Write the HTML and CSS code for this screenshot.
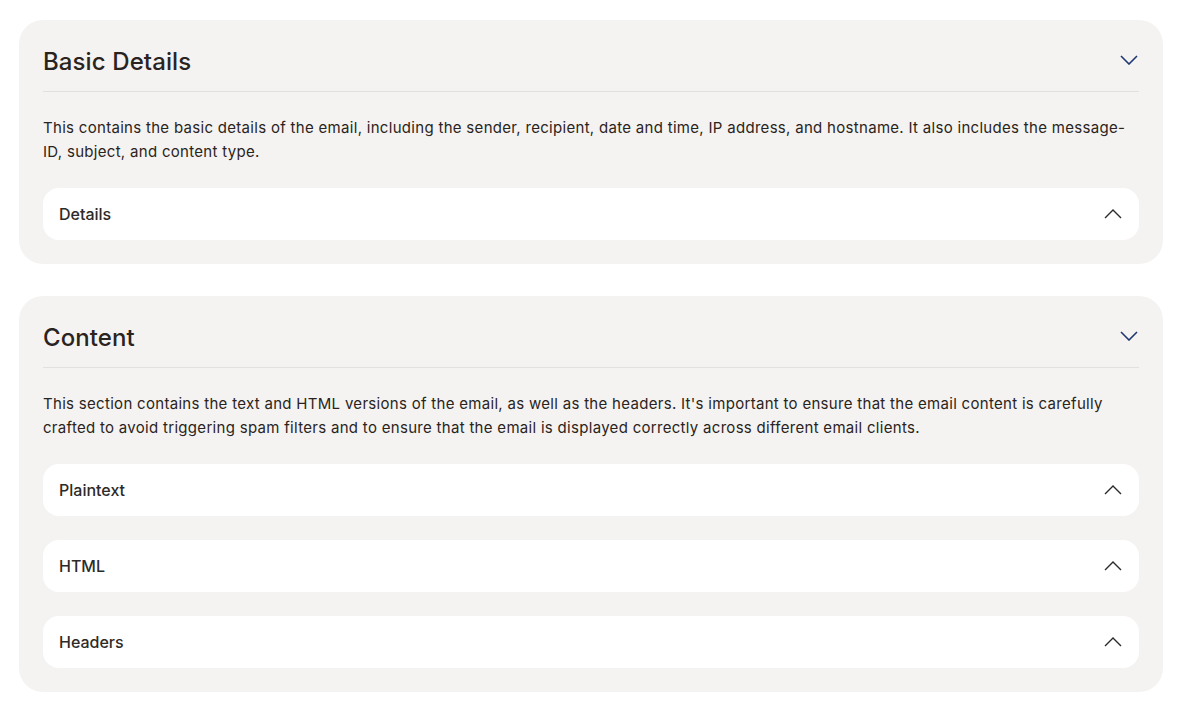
FILE: index.html
```html
<!DOCTYPE html>
<html lang="en">
<head>
<meta charset="utf-8">
<title>Email details</title>
<link rel="stylesheet" href="styles.css">
</head>
<body>
<main class="page">
  <section class="card">
    <header class="card-head">
      <h2 class="card-title">Basic Details</h2>
      <svg class="chev-down" width="18" height="10" viewBox="0 0 18 10" aria-hidden="true"><path d="M1 1l8 8 8-8" fill="none" stroke="currentColor" stroke-width="1.6"/></svg>
    </header>
    <p class="card-desc">This contains the basic details of the email, including the sender, recipient, date and time, IP address, and hostname. It also includes the message-ID, subject, and content type.</p>
    <div class="rows">
      <div class="row"><span class="row-label">Details</span><svg class="chev-up" width="18" height="10" viewBox="0 0 18 10" aria-hidden="true"><path d="M1 9l8-8 8 8" fill="none" stroke="currentColor" stroke-width="1.4"/></svg></div>
    </div>
  </section>
  <section class="card">
    <header class="card-head">
      <h2 class="card-title">Content</h2>
      <svg class="chev-down" width="18" height="10" viewBox="0 0 18 10" aria-hidden="true"><path d="M1 1l8 8 8-8" fill="none" stroke="currentColor" stroke-width="1.6"/></svg>
    </header>
    <p class="card-desc">This section contains the text and HTML versions of the email, as well as the headers. It's important to ensure that the email content is carefully crafted to avoid triggering spam filters and to ensure that the email is displayed correctly across different email clients.</p>
    <div class="rows">
      <div class="row"><span class="row-label">Plaintext</span><svg class="chev-up" width="18" height="10" viewBox="0 0 18 10" aria-hidden="true"><path d="M1 9l8-8 8 8" fill="none" stroke="currentColor" stroke-width="1.4"/></svg></div>
      <div class="row"><span class="row-label">HTML</span><svg class="chev-up" width="18" height="10" viewBox="0 0 18 10" aria-hidden="true"><path d="M1 9l8-8 8 8" fill="none" stroke="currentColor" stroke-width="1.4"/></svg></div>
      <div class="row"><span class="row-label">Headers</span><svg class="chev-up" width="18" height="10" viewBox="0 0 18 10" aria-hidden="true"><path d="M1 9l8-8 8 8" fill="none" stroke="currentColor" stroke-width="1.4"/></svg></div>
    </div>
  </section>
</main>
</body>
</html>
```

FILE: styles.css
```css
* { box-sizing: border-box; }
html, body { margin: 0; padding: 0; background: #ffffff; }
body {
  font-family: Inter, "Noto Sans", "Liberation Sans", sans-serif;
  color: #2a2420;
}
.page {
  padding: 20px 27px 24px 19px;
  display: flex;
  flex-direction: column;
  gap: 32px;
}
.card {
  background: #f5f3f2;
  border-radius: 24px;
  padding: 24px;
}
.card-head {
  display: flex;
  align-items: center;
  justify-content: space-between;
  height: 48px;
  padding-bottom: 13px;
  border-bottom: 1px solid #e2e0de;
}
.card-title {
  margin: 2px 0 0;
  font-size: 24px;
  font-weight: 500;
  line-height: 34px;
  letter-spacing: 0.1px;
  color: #2a2420;
}
.chev-down {
  display: block;
  color: #1d3770;
  margin-right: 1px;
  margin-top: -3px;
}
.card-desc {
  margin: 24px 0;
  font-size: 15px;
  line-height: 24px;
  letter-spacing: 0.3px;
  color: #2a2420;
}
.rows {
  display: flex;
  flex-direction: column;
  gap: 24px;
}
.row {
  display: flex;
  align-items: center;
  justify-content: space-between;
  height: 52px;
  padding: 0 17px 0 16px;
  background: #ffffff;
  border-radius: 16px;
}
.row-label {
  font-size: 16px;
  font-weight: 500;
  color: #2e2a27;
}
.chev-up {
  display: block;
  color: #2a2a2a;
}
```
